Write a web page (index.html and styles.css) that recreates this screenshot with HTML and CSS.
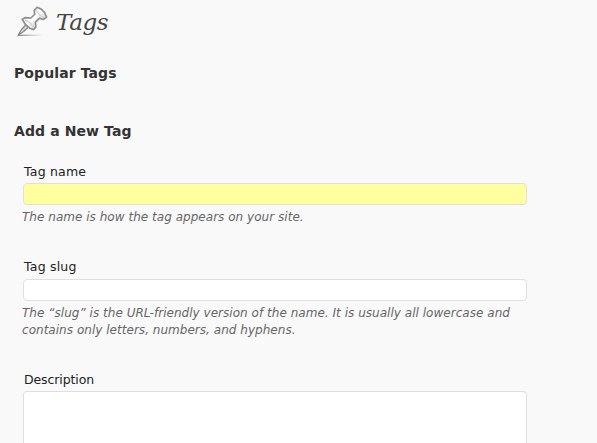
FILE: index.html
```
<!DOCTYPE html>
<html lang="en">
<head>
<meta charset="utf-8">
<title>Tags</title>
<link rel="stylesheet" href="styles.css">
</head>
<body>
<main class="wrap">
  <header class="page-head">
    <svg class="pin" width="32" height="32" viewBox="0 0 32 32" aria-hidden="true">
      <defs>
        <linearGradient id="metal" x1="0" y1="0" x2="1" y2="1">
          <stop offset="0" stop-color="#d0d0d0"/><stop offset=".45" stop-color="#fff"/><stop offset="1" stop-color="#b4b4b4"/>
        </linearGradient>
        <linearGradient id="shade"><stop offset="0" stop-color="#888"/><stop offset="1" stop-color="#999" stop-opacity="0"/></linearGradient>
      </defs>
      <path d="M2 29.6H27V31H2Z" fill="url(#shade)"/>
      <path d="M10.2 19.5L5.5 24.5L2 30.3L7.6 26.5L12.5 21.8Z" fill="#ddd" stroke="#858585" stroke-width="1.2" stroke-linejoin="round"/>
      <path d="M6.2 14.2L9.2 12.6L15 13L18.8 9.3L18.2 5.5L21 2.3L25.2 4.1L28.6 7.7L30.6 12.1L27.7 14.3L23.3 13.4L19.4 17.3L19.9 21.9L17.5 24.6L13.6 23.2L9.2 19.2Z" fill="url(#metal)" stroke="#909090" stroke-width="1.7" stroke-linejoin="round"/>
      <path d="M20.5 4.8Q21.5 9.5 27.9 12.6M8.5 14.8Q14 16.4 17.3 22" fill="none" stroke="#d2d2d2" stroke-width="1.2"/>
      <path d="M15.5 15.5L21 10" fill="none" stroke="#fff" stroke-width="2.4"/>
    </svg>
    <h1 class="title">Tags</h1>
  </header>
  <h2 class="section popular">Popular Tags</h2>
  <h2 class="section add">Add a New Tag</h2>
  <form class="form">
    <div class="field name">
      <label class="label" for="name">Tag name</label>
      <input class="control filled" id="name" type="text">
      <p class="hint">The name is how the tag appears on your site.</p>
    </div>
    <div class="field slug">
      <label class="label" for="slug">Tag slug</label>
      <input class="control" id="slug" type="text">
      <p class="hint">The “slug” is the URL-friendly version of the name. It is usually all lowercase and<br>contains only letters, numbers, and hyphens.</p>
    </div>
    <div class="field">
      <label class="label wide" for="description">Description</label>
      <textarea class="control area" id="description"></textarea>
    </div>
  </form>
</main>
</body>
</html>
```
FILE: styles.css
```
* { box-sizing: border-box; }
body {
  margin: 0;
  height: 443px;
  overflow: hidden;
  background: #f9f9f9;
  color: #222;
  font-family: Verdana, "DejaVu Sans", sans-serif;
}
.wrap { padding: 5px 0 0 14px; }
.page-head { display: flex; height: 32px; }
.pin { flex: none; margin-left: 2px; }
.title {
  margin: 0 0 0 8px;
  font: italic 400 23px/34px Georgia, "DejaVu Serif", serif;
  letter-spacing: -0.4px;
  color: #464646;
}
.section {
  margin: 0;
  font-size: 14px;
  line-height: 18px;
  font-weight: 700;
  letter-spacing: 0.1px;
  color: #333;
}
.popular { margin-top: 27px; }
.add { margin-top: 40px; }
.form { padding: 23px 0 0 9px; }
.field { width: 504px; }
.name { height: 95px; }
.slug { height: 113px; }
.label {
  display: block;
  margin-left: 1px;
  height: 20px;
  font-size: 12.5px;
  line-height: 18px;
  letter-spacing: 0.2px;
}
.wide { letter-spacing: -0.1px; }
.control {
  display: block;
  width: 504px;
  height: 22px;
  margin: 0;
  border: 1px solid #dfdfdf;
  border-radius: 4px;
  background: #fff;
  outline: none;
  resize: none;
}
.filled { background: #ffff9f; }
.slug .control { margin-top: 1px; }
.area { height: 52px; border-bottom: 0; border-radius: 4px 4px 0 0; }
.hint {
  margin: 4px 0 0 -1px;
  font-size: 12px;
  line-height: 17px;
  letter-spacing: 0.03px;
  font-style: italic;
  color: #666;
  white-space: nowrap;
}
```
